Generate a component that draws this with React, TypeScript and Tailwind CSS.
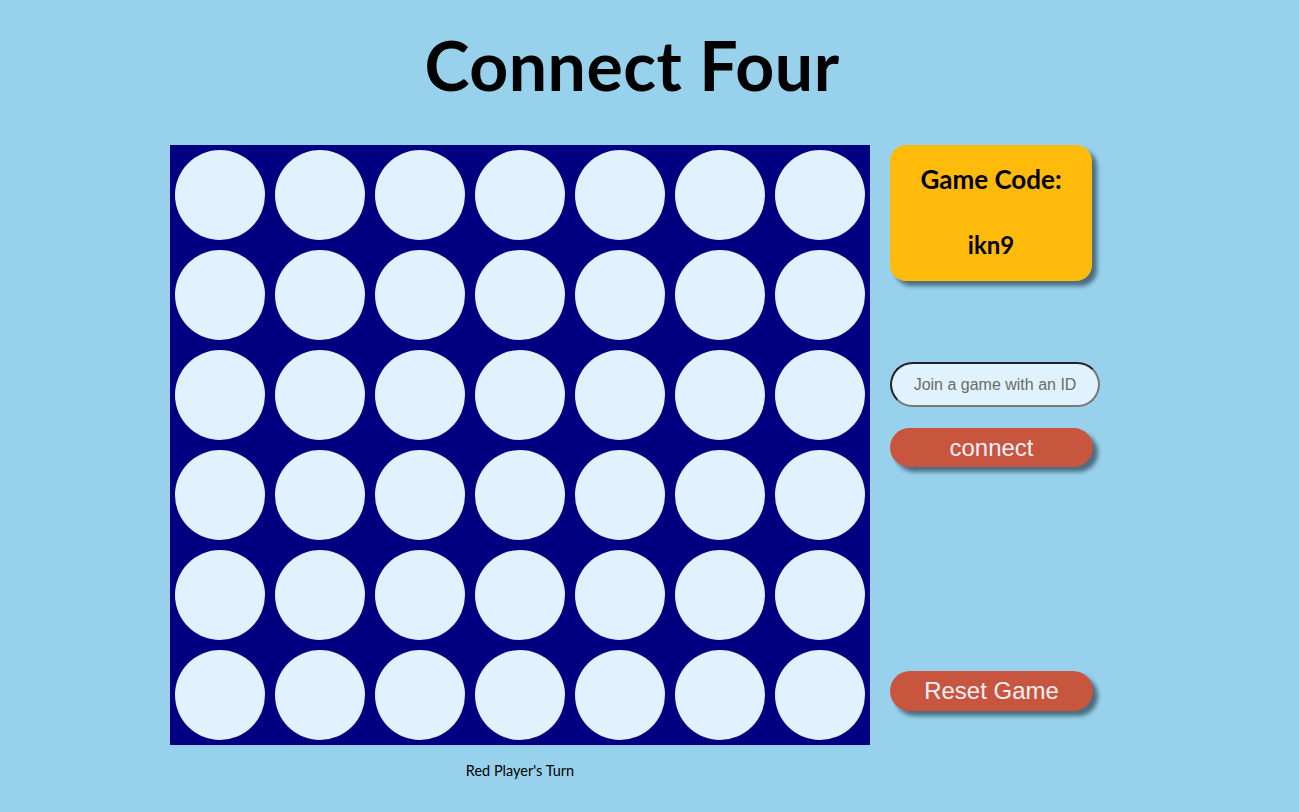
import React from "react";

export default function App() {
  const rows = Array.from({ length: 6 });
  const cols = Array.from({ length: 7 });
  return (
    <div
      className="min-h-[812px] w-full bg-[#97d1eb] text-black"
      style={{ fontFamily: "Lato, 'Open Sans', sans-serif" }}
    >
      <div className="mx-auto w-[959px]">
        <h1 className="pr-[35px] pt-[29px] text-center text-[68px] font-bold leading-[72px] tracking-[0.5px]">
          Connect Four
        </h1>
        <div className="mt-[44px] flex gap-[20px]">
          <div className="flex flex-col items-center">
            <div className="grid w-[700px] grid-cols-7 bg-[#000080]">
              {rows.map((_, r) =>
                cols.map((_, c) => (
                  <div key={`${r}-${c}`} className="flex h-[100px] w-[100px] items-center justify-center">
                    <div className="h-[90px] w-[90px] rounded-full bg-[#e0f2fe]" />
                  </div>
                ))
              )}
            </div>
            <div className="mt-[17px] text-[14.5px] leading-[18px]">Red Player's Turn</div>
          </div>
          <div className="flex w-[239px] flex-col items-start">
            <div className="flex h-[136px] w-[202px] flex-col items-center rounded-[16px] bg-[#ffbb0b] shadow-[5px_5px_4px_#4b6e80]">
              <div className="mt-[19px] text-[26px] font-bold leading-[30px]">Game Code:</div>
              <div className="mt-[37px] text-[24px] font-bold leading-[28px]">ikn9</div>
            </div>
            <input
              className="mt-[81px] h-[45px] w-[210px] rounded-full border-2 border-t-[#222] border-l-[#222] border-b-[#777] border-r-[#777] bg-[#e0f2fe] text-center text-[16px] text-[#555] outline-none placeholder:text-[#6b6b6b]"
              style={{ fontFamily: "'Liberation Sans', Arial, sans-serif" }}
              placeholder="Join a game with an ID"
            />
            <button
              className="mt-[21px] h-[39px] w-[203px] rounded-full bg-[#c8553d] text-[24px] leading-[28px] text-[#f0f0fa] shadow-[5px_5px_4px_#4b6e80]"
              style={{ fontFamily: "'Liberation Sans', Arial, sans-serif" }}
            >
              connect
            </button>
            <button
              className="mt-[204px] h-[40px] w-[203px] rounded-full bg-[#c8553d] text-[24px] leading-[28px] text-[#f0f0fa] shadow-[5px_5px_4px_#4b6e80]"
              style={{ fontFamily: "'Liberation Sans', Arial, sans-serif" }}
            >
              Reset Game
            </button>
          </div>
        </div>
      </div>
    </div>
  );
}
